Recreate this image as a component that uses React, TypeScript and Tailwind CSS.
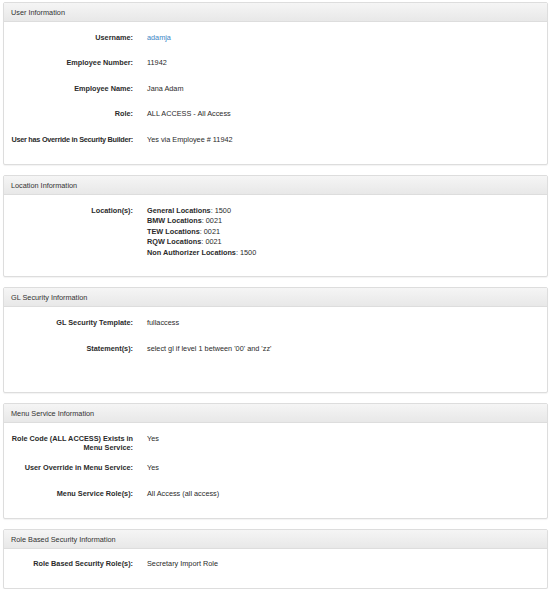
import React from 'react';

type Row = { label: React.ReactNode; value: React.ReactNode; labelClass?: string };

const Panel = ({ title, rows, extra = 0 }: { title: string; rows: Row[]; extra?: number }) => (
  <div className="rounded-[2px] border border-[#dddddd] bg-white shadow-[0_1px_1px_rgba(0,0,0,0.05)]">
    <div className="h-[19px] border-b border-[#dddddd] bg-gradient-to-b from-[#f5f5f5] to-[#e8e8e8] px-[7px] text-[7.3px] leading-[19px] text-[#333]">
      {title}
    </div>
    <div className="pt-[7px] pb-[7px]">
      {rows.map((r, i) => (
        <div key={i} className="mb-[7.8px] flex">
          <div className="flex w-[129px] shrink-0 justify-end pt-[3.6px] font-bold text-[#2b2b2b]">
            <span className={`whitespace-nowrap text-right ${r.labelClass ?? ''}`}>{r.label}</span>
          </div>
          <div className="min-h-[17.7px] pl-[14px] py-[3.6px] text-[#2b2b2b]">{r.value}</div>
        </div>
      ))}
      {extra > 0 && <div style={{ height: extra }} />}
    </div>
  </div>
);

const Loc = ({ name, value }: { name: string; value: string }) => (
  <div>
    <span className="font-bold">{name}</span>: {value}
  </div>
);

export default function App() {
  return (
    <div className="flex w-[551px] flex-col gap-[10px] px-[3px] pt-[2px] font-['Liberation_Sans',Arial,sans-serif] text-[7.3px] leading-[10.4px]">
      <Panel
        title="User Information"
        extra={1}
        rows={[
          { label: 'Username:', value: <span className="text-[#3a85c6]">adamja</span> },
          { label: 'Employee Number:', value: '11942' },
          { label: 'Employee Name:', value: 'Jana Adam' },
          { label: 'Role:', value: 'ALL ACCESS - All Access' },
          {
            label: 'User has Override in Security Builder:',
            labelClass: 'tracking-[-0.27px]',
            value: 'Yes via Employee # 11942',
          },
        ]}
      />
      <Panel
        title="Location Information"
        rows={[
          {
            label: 'Location(s):',
            value: (
              <div>
                <Loc name="General Locations" value="1500" />
                <Loc name="BMW Locations" value="0021" />
                <Loc name="TEW Locations" value="0021" />
                <Loc name="RQW Locations" value="0021" />
                <Loc name="Non Authorizer Locations" value="1500" />
              </div>
            ),
          },
        ]}
      />
      <Panel
        title="GL Security Information"
        extra={20}
        rows={[
          { label: 'GL Security Template:', value: 'fullaccess' },
          { label: 'Statement(s):', value: "select gl if level 1 between '00' and 'zz'" },
        ]}
      />
      <Panel
        title="Menu Service Information"
        rows={[
          {
            label: (
              <>
                Role Code (ALL ACCESS) Exists in
                <br />
                Menu Service:
              </>
            ),
            labelClass: 'leading-[9px]',
            value: 'Yes',
          },
          { label: 'User Override in Menu Service:', value: 'Yes' },
          { label: 'Menu Service Role(s):', value: 'All Access (all access)' },
        ]}
      />
      <Panel
        title="Role Based Security Information"
        rows={[{ label: 'Role Based Security Role(s):', value: 'Secretary Import Role' }]}
      />
    </div>
  );
}
